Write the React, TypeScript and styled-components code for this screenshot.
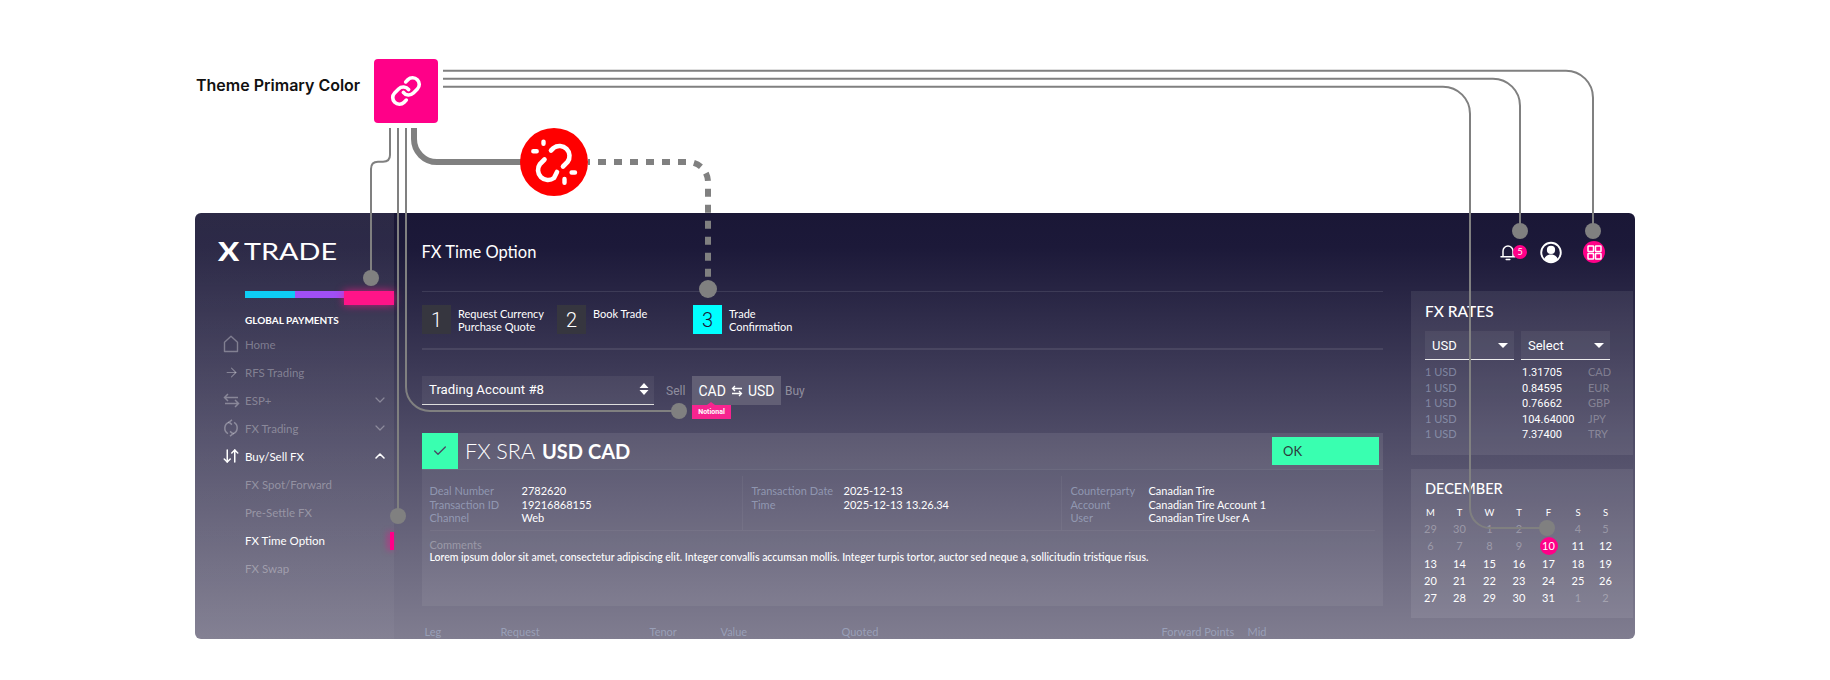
import React from "react";
import styled, { createGlobalStyle } from "styled-components";
import { ArrowDownUp, ArrowRight, ChevronDown, ChevronUp, Check, Link as LinkIcon } from "lucide-react";

const Global = createGlobalStyle`
  html, body { margin: 0; padding: 0; background: #fff; }
  body { font-family: "Lato", "Open Sans", sans-serif; overflow: hidden; }
  * { box-sizing: border-box; }
`;

const Page = styled.div`
  position: relative;
  width: 1830px;
  height: 680px;
  padding: 59px 0 0 195px;
  overflow: hidden;
`;

const LegendRow = styled.div`
  display: flex;
  align-items: flex-start;
  gap: 15px;
  height: 64px;
  margin-bottom: 90px;
`;

const LegendLabel = styled.div`
  flex: 0 0 164px;
  min-width: 0;
  font-family: "Inter", sans-serif;
  font-weight: 600;
  font-size: 16px;
  line-height: 18px;
  margin-top: 17px;
  padding-left: 1px;
  color: #111;
  white-space: nowrap;
`;

const LegendSwatch = styled.div`
  width: 64px;
  height: 64px;
  border-radius: 4px;
  background: #ff0088;
  color: #fff;
  display: flex;
  align-items: center;
  justify-content: center;
`;

const Card = styled.div`
  display: flex;
  width: 1440px;
  height: 426px;
  border-radius: 6px;
  overflow: hidden;
  background: linear-gradient(180deg, #1a1736 0%, #1c1939 8%, #4e4b66 52%, #807d90 100%);
`;

const Sidebar = styled.aside`
  flex: 0 0 199px;
  padding-top: 25px;
  background: linear-gradient(180deg, rgba(255, 255, 255, 0.08), rgba(255, 255, 255, 0.03));
  display: flex;
  flex-direction: column;
`;

const Logo = styled.div`
  height: 26px;
  margin-left: 23px;
  display: flex;
  align-items: center;
  color: #fff;
  font-family: "Lato", sans-serif;
  line-height: 26px;
`;

const LogoX = styled.span`
  flex: 0 0 26px;
  font-weight: 900;
  font-size: 26px;
  transform: scaleX(1.2);
  transform-origin: left;
`;

const LogoWord = styled.span`
  font-weight: 400;
  font-size: 24px;
  transform: scaleX(1.2);
  transform-origin: left;
`;

const Progress = styled.div`
  display: flex;
  height: 14px;
  margin: 27px 0 0 50px;
`;

const ProgressPart = styled.div<{ $c: string }>`
  flex: 1;
  height: 7px;
  background: ${(p) => p.$c};
`;

const ProgressActive = styled.div`
  flex: 1;
  height: 14px;
  background: #ff1488;
  box-shadow: 0 0 8px rgba(255, 20, 136, 0.75);
`;

const SideHeading = styled.div`
  margin: 8px 0 3px 50px;
  font-family: "Lato", sans-serif;
  font-weight: 700;
  font-size: 10px;
  line-height: 14px;
  color: #fff;
`;

const NavRow = styled.div<{ $active?: boolean; $sub?: boolean }>`
  position: relative;
  flex: 0 0 28.1px;
  display: flex;
  align-items: center;
  padding-left: ${(p) => (p.$sub ? "50px" : "22px")};
  padding-right: 6px;
  font-size: 11.5px;
  color: ${(p) => (p.$active ? "#fff" : "rgba(255,255,255,0.33)")};
`;

const NavIcon = styled.span`
  flex: 0 0 28px;
  width: 28px;
  display: flex;
  justify-content: center;
  color: inherit;
`;

const NavLabel = styled.span`
  flex: 1;
  white-space: nowrap;
`;

const NavMarker = styled.span`
  position: absolute;
  right: 0;
  top: 5px;
  width: 4px;
  height: 18px;
  background: #ff0088;
  box-shadow: -2px 0 6px rgba(255, 0, 136, 0.6);
`;

const Main = styled.main`
  flex: 0 0 989px;
  padding-left: 28px;
  display: flex;
  flex-direction: column;
`;

const TitleBar = styled.div`
  flex: 0 0 79px;
  display: flex;
  align-items: center;
  border-bottom: 1px solid rgba(255, 255, 255, 0.1);
  font-size: 16.5px;
  color: #fff;
  font-weight: 400;
  padding-bottom: 1px;
  text-indent: -0.5px;
`;

const Steps = styled.div`
  display: flex;
  flex: 0 0 58px;
  padding-top: 13px;
  border-bottom: 2px solid rgba(255, 255, 255, 0.09);
`;

const Step = styled.div<{ $w: number }>`
  flex: 0 0 ${(p) => p.$w}px;
  display: flex;
  gap: 7px;
`;

const StepNum = styled.div<{ $on?: boolean }>`
  flex: 0 0 29px;
  height: 29px;
  display: flex;
  align-items: center;
  justify-content: center;
  font-family: "Roboto", sans-serif;
  font-size: 20px;
  font-weight: 300;
  background: ${(p) => (p.$on ? "#00ffff" : "#36363f")};
  color: ${(p) => (p.$on ? "#1b1838" : "#fff")};
`;

const StepText = styled.div`
  font-size: 11px;
  line-height: 13px;
  color: #fff;
  padding-top: 2px;
  white-space: nowrap;
`;

const AccountRow = styled.div`
  display: flex;
  align-items: stretch;
  height: 29px;
  margin-top: 26px;
`;

const AccountSelect = styled.div`
  flex: 0 0 232px;
  display: flex;
  align-items: center;
  justify-content: space-between;
  padding: 0 5px 2px 7px;
  background: rgba(255, 255, 255, 0.06);
  border-bottom: 1px solid #ddd;
  color: #fff;
  font-family: "Roboto", sans-serif;
  font-size: 13.2px;
`;

const SideText = styled.div<{ $w: number; $pad: number }>`
  flex: 0 0 ${(p) => p.$w}px;
  display: flex;
  align-items: center;
  font-family: "Roboto", sans-serif;
  font-size: 12px;
  color: rgba(255, 255, 255, 0.42);
  padding-left: ${(p) => p.$pad}px;
  padding-top: 1px;
`;

const PairSwitch = styled.div`
  position: relative;
  flex: 0 0 89px;
  display: flex;
  align-items: center;
  justify-content: center;
  gap: 5px;
  background: #625f75;
  color: #fff;
  font-family: "Roboto", sans-serif;
  font-size: 14px;
`;

const NotionalTag = styled.div`
  position: absolute;
  left: 0;
  top: 29px;
  width: 39px;
  height: 14px;
  background: #f7248f;
  color: #fff;
  font-size: 7px;
  font-weight: 700;
  line-height: 14px;
  text-align: center;
  &::before {
    content: "";
    position: absolute;
    left: 15px;
    top: -3px;
    border-left: 4px solid transparent;
    border-right: 4px solid transparent;
    border-bottom: 3px solid #f7248f;
  }
`;

const Panel = styled.section`
  margin-top: 28px;
  height: 173px;
  background: rgba(255, 255, 255, 0.06);
  display: flex;
  flex-direction: column;
`;

const PanelHead = styled.div`
  flex: 0 0 36px;
  display: flex;
  align-items: center;
  background: rgba(255, 255, 255, 0.03);
  border-bottom: 1px solid rgba(255, 255, 255, 0.05);
`;

const CheckBox = styled.div`
  flex: 0 0 36px;
  height: 36px;
  background: #39ffb0;
  color: #4a4763;
  display: flex;
  align-items: center;
  justify-content: center;
`;

const DealTitle = styled.div`
  flex: 1;
  display: flex;
  gap: 7px;
  padding-left: 7px;
  color: #fff;
  font-size: 21.5px;
  font-weight: 300;
  white-space: nowrap;
`;

const DealStrong = styled.b`
  font-weight: 700;
  font-size: 20px;
  line-height: 26px;
`;

const OkButton = styled.div`
  flex: 0 0 107px;
  height: 28px;
  margin-right: 4px;
  padding-left: 11px;
  background: #39ffb0;
  color: #2c3a3c;
  font-size: 13px;
  line-height: 28px;
`;

const Details = styled.div`
  display: grid;
  grid-template-columns: 312px 319px 1fr;
  margin: 6px 8px 0;
  height: 55px;
  border-bottom: 1px solid rgba(255, 255, 255, 0.05);
`;

const DetailCol = styled.div<{ $label: number; $first?: boolean }>`
  display: grid;
  grid-template-columns: ${(p) => p.$label}px 1fr;
  grid-auto-rows: 13.5px;
  align-content: start;
  padding: 8px 0 0 ${(p) => (p.$first ? "0" : "8.5px")};
  margin-left: ${(p) => (p.$first ? "-0.5px" : "0")};
  border-left: ${(p) => (p.$first ? "0" : "1px solid rgba(255,255,255,0.05)")};
  font-size: 11px;
  line-height: 13.5px;
`;

const DetailLabel = styled.span`
  color: rgba(172, 185, 212, 0.62);
  white-space: nowrap;
`;

const DetailValue = styled.span`
  color: #fff;
  white-space: nowrap;
`;

const Comments = styled.div`
  margin: 7px 8px 0 7.5px;
  font-size: 11px;
  line-height: 13px;
  color: rgba(255, 255, 255, 0.3);
`;

const CommentBody = styled.div`
  color: #fff;
  font-size: 10.5px;
  font-weight: 500;
  white-space: nowrap;
`;

const TableHead = styled.div`
  display: grid;
  grid-template-columns: 76px 149px 71px 121px 320px 86px 60px;
  margin: 19px 0 0 2.5px;
  font-size: 11px;
  line-height: 14px;
  color: rgba(172, 185, 212, 0.6);
  white-space: nowrap;
`;

const RightCol = styled.div`
  flex: 0 0 213px;
  margin-left: 28px;
  display: flex;
  flex-direction: column;
`;

const TopIcons = styled.div`
  flex: 0 0 78px;
  display: flex;
  align-items: center;
  gap: 21px;
  padding-left: 86px;
`;

const TopIcon = styled.div<{ $pink?: boolean }>`
  position: relative;
  width: 22px;
  height: 22px;
  border-radius: 50%;
  display: flex;
  align-items: center;
  justify-content: center;
  background: ${(p) => (p.$pink ? "#ff0088" : "transparent")};
  color: #fff;
`;

const Badge = styled.span`
  position: absolute;
  left: 16px;
  top: 4px;
  width: 14px;
  height: 14px;
  border-radius: 50%;
  background: #ff0088;
  color: #fff;
  font-size: 9px;
  line-height: 14px;
  text-align: center;
`;

const SidePanel = styled.section<{ $h: number; $mt?: number }>`
  height: ${(p) => p.$h}px;
  margin-top: ${(p) => p.$mt || 0}px;
  padding: 0 14px;
  background: rgba(255, 255, 255, 0.08);
`;

const SideTitle = styled.h3`
  margin: 0;
  padding-top: 11px;
  height: 40px;
  font-size: 15.5px;
  line-height: 18px;
  font-weight: 500;
  color: #fff;
`;

const SelectRow = styled.div`
  display: flex;
  gap: 7px;
`;

const MiniSelect = styled.div`
  flex: 0 0 89px;
  height: 29px;
  padding: 0 6px 0 7px;
  display: flex;
  align-items: center;
  justify-content: space-between;
  background: rgba(255, 255, 255, 0.06);
  border-bottom: 1px solid #eee;
  color: #fff;
  font-family: "Roboto", sans-serif;
  font-size: 13px;
`;

const Caret = styled.span`
  width: 0;
  height: 0;
  border-left: 5px solid transparent;
  border-right: 5px solid transparent;
  border-top: 5px solid #fff;
`;

const RateTable = styled.div`
  margin-top: 4px;
  display: grid;
  grid-template-columns: 97px 66px 1fr;
  grid-auto-rows: 15.5px;
  font-size: 11px;
  line-height: 15.5px;
`;

const RateDim = styled.span`
  color: rgba(172, 185, 212, 0.55);
`;

const RateVal = styled.span`
  color: #fff;
  font-family: "Roboto", sans-serif;
  padding-top: 1px;
`;

const RateCcy = styled.span`
  color: rgba(255, 255, 255, 0.3);
`;

const CalTitle = styled(SideTitle)`
  height: 34px;
  font-size: 14.5px;
`;

const CalGrid = styled.div`
  display: grid;
  grid-template-columns: 28px 30px 30px 29px 30px 29px 26px;
  grid-auto-rows: 17.2px;
  margin-left: -8.5px;
  font-size: 11px;
  line-height: 17.2px;
  text-align: center;
`;

const CalHead = styled.span`
  color: #fff;
  font-size: 9.5px;
  line-height: 19px;
`;

const CalDay = styled.span<{ $dim?: boolean; $sel?: boolean }>`
  position: relative;
  z-index: 0;
  color: ${(p) => (p.$dim ? "rgba(255,255,255,0.3)" : "#fff")};
  &::before {
    content: "";
    display: ${(p) => (p.$sel ? "block" : "none")};
    position: absolute;
    z-index: -1;
    left: 50%;
    top: 50%;
    width: 18px;
    height: 18px;
    margin: -9px 0 0 -9px;
    border-radius: 50%;
    background: #ff0088;
  }
`;

const Overlay = styled.svg`
  position: absolute;
  left: 0;
  top: 0;
  pointer-events: none;
`;

const nav = [
  { label: "Home", icon: "home" },
  { label: "RFS Trading", icon: "arrow" },
  { label: "ESP+", icon: "swap", chev: "down" },
  { label: "FX Trading", icon: "cycle", chev: "down" },
  { label: "Buy/Sell FX", icon: "updown", chev: "up", active: true },
];
const sub = [
  { label: "FX Spot/Forward" },
  { label: "Pre-Settle FX" },
  { label: "FX Time Option", active: true, marker: true },
  { label: "FX Swap" },
];

const rates = [
  ["1.31705", "CAD"],
  ["0.84595", "EUR"],
  ["0.76662", "GBP"],
  ["104.64000", "JPY"],
  ["7.37400", "TRY"],
];

const days: [string, boolean][] = [
  ...["29", "30", "1", "2", "3", "4", "5", "6", "7", "8", "9"].map((d) => [d, true] as [string, boolean]),
  ...Array.from({ length: 22 }, (_, i) => [String(i + 10), false] as [string, boolean]),
  ["1", true],
  ["2", true],
];

function NavGlyph({ kind }: { kind: string }) {
  if (kind === "arrow") return <ArrowRight size={15} strokeWidth={1.8} />;
  if (kind === "updown") return <ArrowDownUp size={18} strokeWidth={2} />;
  if (kind === "home")
    return (
      <svg width="16" height="18" viewBox="0 0 16 18" fill="none" stroke="currentColor" strokeWidth="1.4">
        <path d="M1.5 16.5V7.2L8 1.2l6.5 6v9.3z" strokeLinejoin="round" />
      </svg>
    );
  if (kind === "swap")
    return (
      <svg width="17" height="15" viewBox="0 0 17 15" fill="none" stroke="currentColor" strokeWidth="1.5">
        <path d="M15 4.5H1.5M5 1 1.5 4.5 5 8M2 10.5h13.5M12 7l3.5 3.5L12 14" />
      </svg>
    );
  return (
    <svg width="16" height="18" viewBox="0 0 16 18" fill="none" stroke="currentColor" strokeWidth="1.5">
      <path d="M6 3.2A6.3 6.3 0 0 0 5 14.6M10 14.8A6.3 6.3 0 0 0 11 3.4" />
      <path d="M9 .8 6 3.2l3 2.4M7 17.2l3-2.4-3-2.4" />
    </svg>
  );
}

export default function App() {
  return (
    <Page>
      <Global />
      <LegendRow>
        <LegendLabel>Theme Primary Color</LegendLabel>
        <LegendSwatch>
          <LinkIcon size={32} strokeWidth={2.7} />
        </LegendSwatch>
      </LegendRow>
      <Card>
        <Sidebar>
          <Logo>
            <LogoX>X</LogoX>
            <LogoWord>TRADE</LogoWord>
          </Logo>
          <Progress>
            <ProgressPart $c="#0dcdf5" />
            <ProgressPart $c="#a04ff5" />
            <ProgressActive />
          </Progress>
          <SideHeading>GLOBAL PAYMENTS</SideHeading>
          {nav.map((n) => (
            <NavRow key={n.label} $active={n.active}>
              <NavIcon>
                <NavGlyph kind={n.icon} />
              </NavIcon>
              <NavLabel>{n.label}</NavLabel>
              {n.chev === "down" && <ChevronDown size={16} strokeWidth={1.8} />}
              {n.chev === "up" && <ChevronUp size={16} strokeWidth={2.4} />}
            </NavRow>
          ))}
          {sub.map((n) => (
            <NavRow key={n.label} $sub $active={n.active}>
              <NavLabel>{n.label}</NavLabel>
              {n.marker && <NavMarker />}
            </NavRow>
          ))}
        </Sidebar>
        <Main>
          <TitleBar>FX Time Option</TitleBar>
          <Steps>
            <Step $w={135}>
              <StepNum>1</StepNum>
              <StepText>
                Request Currency
                <br />
                Purchase Quote
              </StepText>
            </Step>
            <Step $w={136}>
              <StepNum>2</StepNum>
              <StepText>Book Trade</StepText>
            </Step>
            <Step $w={200}>
              <StepNum $on>3</StepNum>
              <StepText>
                Trade
                <br />
                Confirmation
              </StepText>
            </Step>
          </Steps>
          <AccountRow>
            <AccountSelect>
              Trading Account #8
              <svg width="10" height="14" viewBox="0 0 10 14" fill="#fff">
                <path d="M5 1l4.5 5h-9zM5 13 .5 8h9z" />
              </svg>
            </AccountSelect>
            <SideText $w={38} $pad={12}>Sell</SideText>
            <PairSwitch>
              CAD
              <svg width="12" height="12" viewBox="0 0 12 12" fill="none" stroke="#fff" strokeWidth="1.3">
                <path d="M11 3.5H1.5M4 1 1.5 3.5 4 6M1 8.5h9.5M8 6l2.5 2.5L8 11" />
              </svg>
              USD
              <NotionalTag>Notional</NotionalTag>
            </PairSwitch>
            <SideText $w={30} $pad={4}>Buy</SideText>
          </AccountRow>
          <Panel>
            <PanelHead>
              <CheckBox>
                <Check size={16} strokeWidth={2} />
              </CheckBox>
              <DealTitle>
                FX SRA <DealStrong>USD CAD</DealStrong>
              </DealTitle>
              <OkButton>OK</OkButton>
            </PanelHead>
            <Details>
              <DetailCol $first $label={92}>
                <DetailLabel>Deal Number</DetailLabel>
                <DetailValue>2782620</DetailValue>
                <DetailLabel>Transaction ID</DetailLabel>
                <DetailValue>19216868155</DetailValue>
                <DetailLabel>Channel</DetailLabel>
                <DetailValue>Web</DetailValue>
              </DetailCol>
              <DetailCol $label={92}>
                <DetailLabel>Transaction Date</DetailLabel>
                <DetailValue>2025-12-13</DetailValue>
                <DetailLabel>Time</DetailLabel>
                <DetailValue>2025-12-13 13.26.34</DetailValue>
              </DetailCol>
              <DetailCol $label={78}>
                <DetailLabel>Counterparty</DetailLabel>
                <DetailValue>Canadian Tire</DetailValue>
                <DetailLabel>Account</DetailLabel>
                <DetailValue>Canadian Tire Account 1</DetailValue>
                <DetailLabel>User</DetailLabel>
                <DetailValue>Canadian Tire User A</DetailValue>
              </DetailCol>
            </Details>
            <Comments>
              Comments
              <CommentBody>
                Lorem ipsum dolor sit amet, consectetur adipiscing elit. Integer convallis accumsan mollis. Integer turpis tortor, auctor sed neque a, sollicitudin tristique risus.
              </CommentBody>
            </Comments>
          </Panel>
          <TableHead>
            <span>Leg</span>
            <span>Request</span>
            <span>Tenor</span>
            <span>Value</span>
            <span>Quoted</span>
            <span>Forward Points</span>
            <span>Mid</span>
          </TableHead>
        </Main>
        <RightCol>
          <TopIcons>
            <TopIcon>
              <svg width="16" height="17" viewBox="0 0 16 17" fill="none" stroke="#fff" strokeWidth="1.5">
                <path d="M3 12.5V7a5 5 0 0 1 10 0v5.5M1 12.8h14" strokeLinecap="round" />
                <path d="M6.2 15.6h3.6" strokeLinecap="round" />
              </svg>
              <Badge>5</Badge>
            </TopIcon>
            <TopIcon>
              <svg width="23" height="23" viewBox="0 0 23 23" fill="none">
                <circle cx="11.5" cy="11.5" r="10.2" stroke="#fff" strokeWidth="2" />
                <circle cx="11.5" cy="8.8" r="4.3" fill="#fff" />
                <path d="M4.3 18.5c1-3.4 3.6-5 7.2-5s6.2 1.6 7.2 5a10 10 0 0 1-14.4 0z" fill="#fff" />
              </svg>
            </TopIcon>
            <TopIcon $pink>
              <svg width="15" height="15" viewBox="0 0 15 15" fill="none" stroke="#fff" strokeWidth="1.5">
                <rect x="1" y="1" width="5.5" height="5.5" rx=".5" />
                <rect x="8.5" y="1" width="5.5" height="5.5" rx=".5" />
                <rect x="1" y="8.5" width="5.5" height="5.5" rx=".5" />
                <rect x="8.5" y="8.5" width="5.5" height="5.5" rx=".5" />
              </svg>
            </TopIcon>
          </TopIcons>
          <SidePanel $h={164}>
            <SideTitle>FX RATES</SideTitle>
            <SelectRow>
              <MiniSelect>
                USD
                <Caret />
              </MiniSelect>
              <MiniSelect>
                Select
                <Caret />
              </MiniSelect>
            </SelectRow>
            <RateTable>
              {rates.map(([v, c]) => (
                <React.Fragment key={c}>
                  <RateDim>1 USD</RateDim>
                  <RateVal>{v}</RateVal>
                  <RateCcy>{c}</RateCcy>
                </React.Fragment>
              ))}
            </RateTable>
          </SidePanel>
          <SidePanel $h={149} $mt={14}>
            <CalTitle>DECEMBER</CalTitle>
            <CalGrid>
              {["M", "T", "W", "T", "F", "S", "S"].map((d, i) => (
                <CalHead key={i}>{d}</CalHead>
              ))}
              {days.map(([d, dim], i) => (
                <CalDay key={i} $dim={dim} $sel={d === "10" && !dim}>
                  {d}
                </CalDay>
              ))}
            </CalGrid>
          </SidePanel>
        </RightCol>
      </Card>
      <Overlay width="1830" height="680" viewBox="0 0 1830 680" fill="none">
        <g stroke="#808080" strokeWidth="2">
          <path d="M443 70.7H1566A27 27 0 0 1 1593 97.7V231" />
          <path d="M443 78.7H1493A27 27 0 0 1 1520 105.7V231" />
          <path d="M443 86.7H1443A27 27 0 0 1 1470 113.7V508A20 20 0 0 0 1490 528H1547" />
          <path d="M390 128V155Q390 161.7 383 161.7H378Q371 161.7 371 169V278" />
          <path d="M398 128V516" />
          <path d="M406 128V387A24 24 0 0 0 430 411H679" />
        </g>
        <path d="M414 128V139A23 23 0 0 0 437 162H525" stroke="#808080" strokeWidth="6" />
        <path d="M588 162H688A20 20 0 0 1 708 182V285" stroke="#808080" strokeWidth="6" strokeDasharray="8 8" strokeDashoffset="6" />
        <g fill="#808080">
          <circle cx="371" cy="278" r="8" />
          <circle cx="398" cy="516" r="8" />
          <circle cx="679" cy="411" r="8" />
          <circle cx="708" cy="289" r="9" />
          <circle cx="1593" cy="231" r="8" />
          <circle cx="1520" cy="231" r="8" />
          <circle cx="1547" cy="528" r="8" />
        </g>
        <circle cx="554" cy="162" r="34" fill="#ff0000" />
        <g stroke="#fff" strokeWidth="4.6" strokeLinecap="round">
          <path d="M551 150.5L553.5 148A10 10 0 0 1 567.5 162L563 166.5" />
          <path d="M544.5 159.5L540 164A10 10 0 0 0 554 178L557 172" />
        </g>
        <path d="M543.5 141.6V143.7M533.3 151.3H536.7M571.6 172.5H575M564.5 179V182.7" stroke="#fff" strokeWidth="4.4" strokeLinecap="round" />
      </Overlay>
    </Page>
  );
}
